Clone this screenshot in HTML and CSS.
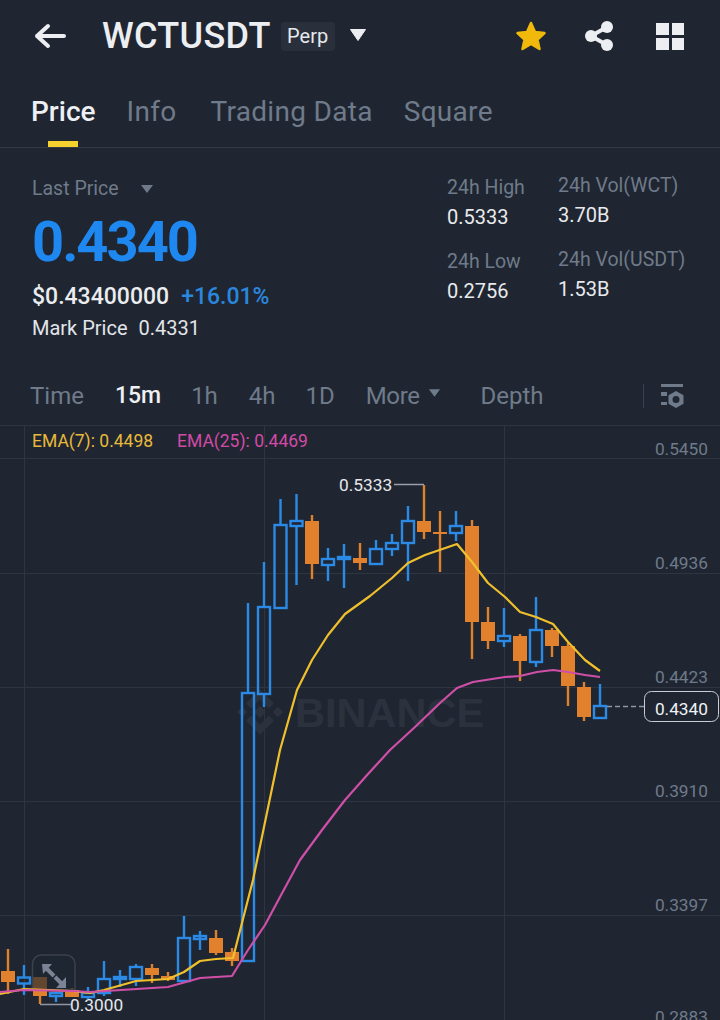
FILE: index.html
```html
<!DOCTYPE html>
<html lang="en">
<head>
<meta charset="utf-8">
<title>WCTUSDT Perp</title>
<link rel="stylesheet" href="styles.css">
</head>
<body>
<div class="page">
  <header class="topbar">
    <svg class="icon-back" width="32" height="26" viewBox="0 0 32 26"><path d="M3 13H30M14 3L3 13L14 23" /></svg>
    <h1 class="symbol">WCTUSDT</h1>
    <span class="badge">Perp</span>
    <svg class="icon-caret" width="18" height="14" viewBox="0 0 18 14"><path d="M1.500 1.500H16.500L9 12.500Z" /></svg>
    <div class="actions">
      <svg class="icon-star" width="34" height="32" viewBox="0 0 34 32"><path d="M17 3L21 12L30.500 13L23.500 19.500L25.500 29L17 24L8.500 29L10.500 19.500L3.500 13L13 12Z" /></svg>
      <svg class="icon-share" width="30" height="30" viewBox="0 0 30 30"><path class="share-line" d="M23 6L7 15L23 24" /><circle cx="23" cy="6" r="6" /><circle cx="7" cy="15" r="6" /><circle cx="23" cy="24" r="6" /></svg>
      <div class="icon-grid"><i></i><i></i><i></i><i></i></div>
    </div>
  </header>

  <nav class="tabs">
    <a class="tab tab-active">Price</a>
    <a class="tab">Info</a>
    <a class="tab tab-wide">Trading Data</a>
    <a class="tab">Square</a>
  </nav>

  <section class="stats">
    <div class="stats-main">
      <div class="last-label">Last Price <svg class="caret-small" width="14" height="10" viewBox="0 0 14 10"><path d="M1 1H13L7 9Z" /></svg></div>
      <div class="last-price">0.4340</div>
      <div class="fiat-row"><span class="fiat">$0.43400000</span><span class="change">+16.01%</span></div>
      <div class="mark-row"><span>Mark Price</span><span>0.4331</span></div>
    </div>
    <div class="stats-col stats-col-a">
      <div class="stat"><div class="stat-label">24h High</div><div class="stat-value">0.5333</div></div>
      <div class="stat"><div class="stat-label">24h Low</div><div class="stat-value">0.2756</div></div>
    </div>
    <div class="stats-col stats-col-b">
      <div class="stat"><div class="stat-label">24h Vol(WCT)</div><div class="stat-value">3.70B</div></div>
      <div class="stat"><div class="stat-label">24h Vol(USDT)</div><div class="stat-value">1.53B</div></div>
    </div>
  </section>

  <div class="intervals">
    <span class="iv iv-time">Time</span>
    <span class="iv iv-15m">15m</span>
    <span class="iv iv-1h">1h</span>
    <span class="iv iv-4h">4h</span>
    <span class="iv iv-1d">1D</span>
    <span class="iv iv-more">More<svg class="caret-small" width="13" height="10" viewBox="0 0 14 10"><path d="M1 1H13L7 9Z" /></svg></span>
    <span class="iv iv-depth">Depth</span>
    <span class="iv-divider"></span>
    <svg class="icon-settings" width="24" height="24" viewBox="0 0 24 24">
      <path d="M1 0H23V3H1ZM1 8H7V12H1ZM1 18H7V21H1Z" />
      <path fill-rule="evenodd" d="M16 7L23.500 11.300V19.700L16 24L8.500 19.700V11.300ZM16 12A3.500 3.500 0 1 0 16 19A3.500 3.500 0 1 0 16 12Z" />
    </svg>
  </div>

  <svg class="chart" width="720" height="595" viewBox="0 425 720 595">
    <g class="grid">
      <path d="M0 425.500H720M0 458.500H720M0 573.500H720M0 687.500H720M0 801.500H720M0 915.500H720" />
      <path d="M24.500 425V1020M264.500 425V1020M504.500 425V1020" />
    </g>

    <g class="watermark">
      <path transform="translate(237 689) scale(0.365)" d="M38.700 53.200L63 28.900L87.300 53.200L101.400 39.100L63 0.700L24.600 39.100ZM0 63L14.100 48.900L28.200 63L14.100 77.100ZM38.700 72.800L63 97.100L87.300 72.800L101.400 86.900L63 125.300L24.600 86.900ZM97.800 63L111.900 48.900L126 63L111.900 77.100ZM63 46L80 63L63 80L46 63Z" />
      <text x="295" y="727">BINANCE</text>
    </g>

    <g class="candle-up">
      <path d="M24 965V977M24 983V995M56 996V1002M88 987V993M88 997V999M104 961V979M104 993V996M120 970V987M136 964V967M136 979V986M184 916V938M200 931V950M248 603V693M264 562V607M264 694V707M280.500 499V525M296.500 494V521M296.500 526V585M328 548V559M328 565V581M344 544V588M376 540V549M376 564V565M392 534V543M392 549V556M408 506V521M408 543V581M456 511V526M456 533V541M504 608V636M504 641V647M536 597V630M536 662V667M600 684V706M600 718V719" />
      <rect x="18" y="977.500" width="12" height="6" />
      <rect x="50" y="993" width="12" height="3" />
      <rect x="82" y="993" width="12" height="4" />
      <rect x="98" y="979" width="12" height="14" />
      <rect x="114" y="977" width="12" height="2" />
      <rect x="130" y="967" width="12" height="12" />
      <rect x="178" y="938" width="12" height="43" />
      <rect x="194" y="936" width="12" height="3" />
      <rect x="242" y="693" width="12" height="268" />
      <rect x="258" y="607" width="12" height="87" />
      <rect x="274.500" y="525" width="12" height="83" />
      <rect x="290.500" y="521" width="12" height="5" />
      <rect x="322" y="559" width="12" height="6" />
      <rect x="338" y="557" width="12" height="2" />
      <rect x="370" y="549" width="12" height="15" />
      <rect x="386" y="543" width="12" height="6" />
      <rect x="402" y="521" width="12" height="22" />
      <rect x="450" y="526" width="12" height="7" />
      <rect x="498" y="636" width="12" height="5" />
      <rect x="530" y="630" width="12" height="32" />
      <rect x="594" y="706" width="12" height="12" />
    </g>

    <g class="candle-down">
      <path d="M8 949V994M40 977V1004M72 988V997M152 964V983M168 972V981M216 930V955M232 948V966M312 515V579M360 543V570M424 485V539M440 511V572M472 520V659M488 607V649M520 634V681M552 628V657M568 643V706M584 682V721" />
      <rect x="1" y="971" width="14" height="11" />
      <rect x="33" y="977" width="14" height="19" />
      <rect x="65" y="990" width="14" height="7" />
      <rect x="145" y="968" width="14" height="7" />
      <rect x="161" y="976" width="14" height="4" />
      <rect x="209" y="938" width="14" height="15" />
      <rect x="225" y="952" width="14" height="9" />
      <rect x="305" y="521" width="14" height="43" />
      <rect x="353" y="558" width="14" height="5" />
      <rect x="417" y="521" width="14" height="11" />
      <rect x="433" y="532" width="14" height="2" />
      <rect x="465" y="526" width="14" height="96" />
      <rect x="481" y="622" width="14" height="19" />
      <rect x="513" y="636" width="14" height="25" />
      <rect x="545" y="630" width="14" height="16" />
      <rect x="561" y="646" width="14" height="40" />
      <rect x="577" y="687" width="14" height="30" />
    </g>

    <g class="expand">
      <path class="expand-box" d="M32.500 990V964A9 9 0 0 1 41.500 955H66A9 9 0 0 1 75 964V990Z" />
      <path class="expand-arrow" d="M42 964H52L43 974ZM66 988H56L66 977Z" />
      <path class="expand-line" d="M46 968L54 976M62 984L55 977" />
    </g>

    <path class="ema ema7" d="M0 994L24 989L72 991L90 993L104 990L136 981L168 979L184 972L200 961L216 959L233 958L253 880L280 750L297 690L312 660L328 635L345 614L370 596L392 578L408 563L425 555L457 544L472 562L488 583L505 597L520 612L536 617L553 624L568 642L585 660L600 671" />
    <path class="ema ema25" d="M0 992L24 990L72 991L90 992L168 987L200 978L232 976L248 950L265 925L280 897L300 860L322 830L345 800L368 774L390 750L415 727L440 703L457 688L473 682L505 677L520 676L537 672L553 670L568 672L585 675L600 677" />

    <path class="callout" d="M394 484.500H424" />
    <path class="callout callout-low" d="M40 1004.500H71" />
    <text class="chart-note" x="339" y="491">0.5333</text>
    <text class="chart-note" x="70" y="1011">0.3000</text>

    <path class="last-dash" d="M607 706.500H644" />
    <rect class="last-box" x="644.500" y="691.500" width="74" height="30" rx="7" />
    <text class="last-text" x="708" y="715">0.4340</text>

    <text class="legend legend-7" x="32" y="447">EMA(7): 0.4498</text>
    <text class="legend legend-25" x="177" y="447">EMA(25): 0.4469</text>

    <g class="axis">
      <text x="708" y="455">0.5450</text>
      <text x="708" y="569">0.4936</text>
      <text x="708" y="683">0.4423</text>
      <text x="708" y="797">0.3910</text>
      <text x="708" y="911">0.3397</text>
      <text x="708" y="1023">0.2883</text>
    </g>
  </svg>
</div>
</body>
</html>
```

FILE: styles.css
```css
* { box-sizing: border-box; }
html, body { margin: 0; padding: 0; background: #1f2631; }
body { font-family: Roboto, "Liberation Sans", sans-serif; color: #eaecef; }
.page { width: 720px; height: 1020px; overflow: hidden; display: flex; flex-direction: column; }

.topbar { height: 72px; display: flex; align-items: center; padding-left: 34px; flex: none; }
.icon-back { fill: none; stroke: #eceef2; stroke-width: 4; stroke-linecap: round; stroke-linejoin: round; }
.symbol { margin: 0 0 0 36px; font-size: 36px; line-height: 1; font-weight: 500; letter-spacing: 0.3px; color: #eceef2; }
.badge { margin-left: 10px; height: 29px; width: 54px; background: #29303c; border-radius: 4px; font-size: 20px; line-height: 29px; text-align: center; color: #e6e8ec; }
.icon-caret { margin-left: 14px; margin-top: -2px; fill: #eceef2; stroke: #eceef2; stroke-linejoin: round; }
.actions { margin-left: auto; margin-right: 36px; display: flex; align-items: center; gap: 37px; }
.icon-star { fill: #f0b90b; stroke: #f0b90b; stroke-width: 2.500; stroke-linejoin: round; margin-right: -1px; }
.icon-share { fill: #eceef2; }
.share-line { fill: none; stroke: #eceef2; stroke-width: 4; }
.icon-grid { width: 28px; height: 27px; margin-left: 5px; display: grid; grid-template-columns: 1fr 1fr; grid-template-rows: 1fr 1fr; gap: 3px; }
.icon-grid i { display: block; background: #eceef2; }

.tabs { height: 76px; flex: none; display: flex; gap: 31px; padding: 22px 0 0 31px; border-bottom: 1px solid #333b47; }
.tab { position: relative; font-size: 28px; line-height: 36px; height: 36px; color: #6f7a8a; letter-spacing: 0.3px; }
.tab-active { color: #eef0f3; font-weight: 500; letter-spacing: 0; }
.tab-active::after { content: ""; position: absolute; left: 17px; top: 47px; width: 30px; height: 6px; background: #f5d130; }
.tab-wide { margin-left: 3px; }

.stats { height: 222px; flex: none; display: flex; padding: 0 0 0 32px; }
.stats-main { width: 415px; padding-top: 29px; }
.last-label { display: flex; align-items: center; gap: 21px; font-size: 19.500px; line-height: 24px; color: #6f7a8a; }
.caret-small { fill: #6f7a8a; flex: none; }
.last-price { margin-top: 14px; font-size: 56px; line-height: 54px; font-weight: 700; color: #1e88f0; letter-spacing: -2px; }
.fiat-row { margin-top: 13px; display: flex; gap: 12px; font-size: 23px; line-height: 30px; font-weight: 500; }
.change { color: #2a86de; }
.mark-row { margin-top: 3px; display: flex; gap: 11px; font-size: 20px; line-height: 26px; color: #e2e5ea; }

.stats-col { display: flex; flex-direction: column; gap: 21px; }
.stats-col-a { width: 111px; padding-top: 28px; }
.stats-col-b { padding-top: 26px; }
.stat-label { font-size: 19.500px; line-height: 24px; color: #6f7a8a; }
.stat-value { margin-top: 5px; font-size: 20px; line-height: 24px; color: #e8eaee; }
.stats-col-a .stat-value { margin-top: 5px; }

.intervals { position: relative; height: 55px; flex: none; display: flex; align-items: center; padding: 0 0 4px 30px; }
.iv { font-size: 24px; line-height: 30px; color: #6f7a8a; }
.iv-15m { margin-left: 31px; color: #eef0f3; font-weight: 500; font-size: 23px; }
.iv-1h { margin-left: 30px; }
.iv-4h { margin-left: 31px; }
.iv-1d { margin-left: 30px; }
.iv-more { margin-left: 31px; display: flex; align-items: center; gap: 8px; letter-spacing: -0.400px; }
.iv-more .caret-small { margin-top: -5px; }
.iv-depth { margin-left: 40px; }
.iv-divider { width: 1px; height: 24px; margin-left: auto; background: #3a424f; }
.icon-settings { fill: #6f7a8a; margin: 0 36px 0 16px; }

.chart { display: block; flex: none; }
.grid path { stroke: #2e3541; stroke-width: 1; fill: none; }
.watermark path { fill: #2b323e; }
.watermark text { font-family: "Liberation Sans", sans-serif; font-weight: 700; font-size: 41.500px; fill: #2b323e; }
.candle-up path { stroke: #2b8ae6; stroke-width: 2.400; fill: none; }
.candle-up rect { stroke: #2b8ae6; stroke-width: 2.400; fill: none; }
.candle-down path { stroke: #dd812f; stroke-width: 2.400; fill: none; }
.candle-down rect { fill: #e2812d; }
.ema { fill: none; stroke-width: 2.200; stroke-linejoin: round; }
.ema7 { stroke: #f0c02c; }
.ema25 { stroke: #cf4fa8; }
.callout { stroke: #9aa1ad; stroke-width: 1.500; fill: none; }
.callout-low { stroke: #8f96a3; }
.chart-note { font-size: 17.300px; fill: #e6e8ec; }
.last-dash { stroke: #8d95a2; stroke-width: 1.500; stroke-dasharray: 5 3; fill: none; }
.last-box { fill: #1f2631; stroke: #c9cdd4; stroke-width: 1; }
.last-text { font-size: 17.300px; fill: #f0f2f5; text-anchor: end; }
.legend { font-size: 17.500px; }
.legend-7 { fill: #e8b93a; }
.legend-25 { fill: #d24aa6; }
.axis text { font-size: 17.300px; fill: #6f7a8a; text-anchor: end; }
.expand-box { fill: rgba(31, 38, 49, 0.65); stroke: #3b424e; stroke-width: 1.500; }
.expand-arrow { fill: #7a8494; }
.expand-line { stroke: #7a8494; stroke-width: 4; fill: none; }
```
